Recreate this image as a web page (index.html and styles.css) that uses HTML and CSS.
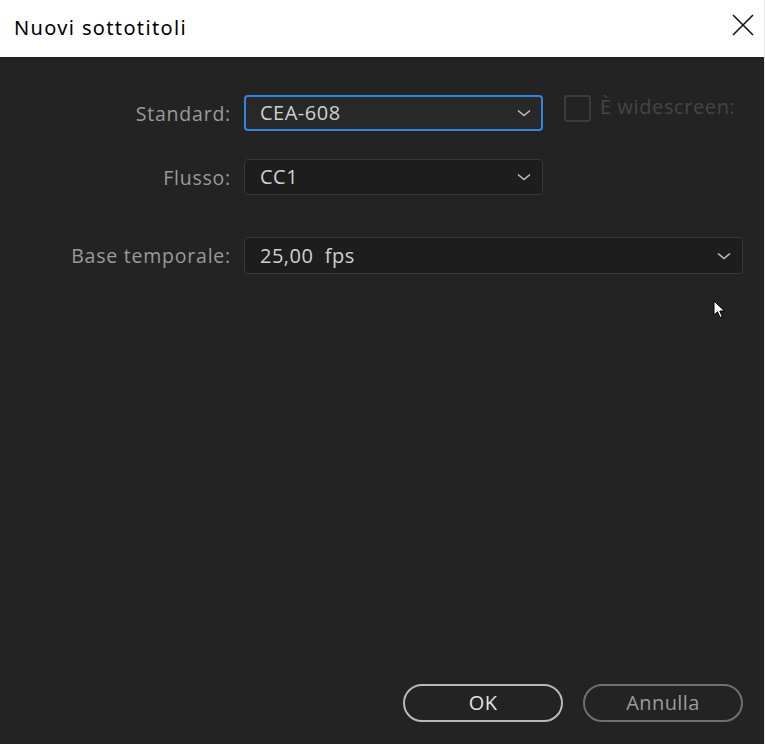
FILE: index.html
```html
<!DOCTYPE html>
<html lang="it">
<head>
<meta charset="utf-8">
<title>Nuovi sottotitoli</title>
<link rel="stylesheet" href="styles.css">
</head>
<body>
<div class="window">
  <header class="titlebar">
    <span class="title">Nuovi sottotitoli</span>
    <svg class="close" width="22" height="22" viewBox="0 0 22 22"><path d="M1 1L21 21M21 1L1 21" stroke="#111" stroke-width="1.6" fill="none"/></svg>
  </header>
  <main class="content">
    <div class="form">
      <div class="row row-standard">
        <label class="label">Standard:</label>
        <div class="select select-focus select-narrow">
          <span class="value">CEA-608</span>
          <svg class="chev" width="14" height="8" viewBox="0 0 14 8"><path d="M1 1.5L7 6.5L13 1.5" stroke="#bdbdbd" stroke-width="1.6" fill="none"/></svg>
        </div>
        <div class="check">
          <span class="box"></span>
          <span class="check-label">È widescreen:</span>
        </div>
      </div>
      <div class="row row-flusso">
        <label class="label">Flusso:</label>
        <div class="select select-narrow">
          <span class="value">CC1</span>
          <svg class="chev" width="14" height="8" viewBox="0 0 14 8"><path d="M1 1.5L7 6.5L13 1.5" stroke="#bdbdbd" stroke-width="1.6" fill="none"/></svg>
        </div>
      </div>
      <div class="row row-base">
        <label class="label">Base temporale:</label>
        <div class="select select-wide">
          <span class="value">25,00&nbsp; fps</span>
          <svg class="chev" width="14" height="8" viewBox="0 0 14 8"><path d="M1 1.5L7 6.5L13 1.5" stroke="#bdbdbd" stroke-width="1.6" fill="none"/></svg>
        </div>
      </div>
    </div>
    <div class="buttons">
      <button class="btn btn-ok">OK</button>
      <button class="btn btn-cancel">Annulla</button>
    </div>
    <svg class="cursor" width="14" height="20" viewBox="0 0 14 20"><path d="M1 1L1 15L4.5 11.8L7 17.5L9.2 16.6L6.8 11L11.5 11Z" fill="#fff" stroke="#000" stroke-width="1"/></svg>
  </main>
</div>
</body>
</html>
```
FILE: styles.css
```css
html, body {
  margin: 0;
  padding: 0;
  width: 765px;
  height: 744px;
  overflow: hidden;
  background: #232323;
}
.window {
  width: 765px;
  height: 744px;
  display: flex;
  flex-direction: column;
  box-sizing: border-box;
  border-right: 1px solid #e9e9e9;
}
.titlebar {
  height: 57px;
  flex: none;
  background: #ffffff;
  display: flex;
  align-items: center;
  justify-content: space-between;
  padding: 0 10px 0 14px;
}
.title {
  font-family: "Noto Sans", "Open Sans", sans-serif;
  font-size: 20px;
  letter-spacing: 1.35px;
  color: #000;
  margin-top: -3px;
}
.close {
  margin-top: -7px;
}
.content {
  flex: 1;
  position: relative;
  display: flex;
  flex-direction: column;
  padding: 38px 0 22px 0;
  font-family: "Open Sans", "Noto Sans", sans-serif;
}
.form {
  display: flex;
  flex-direction: column;
}
.row {
  display: flex;
  align-items: flex-start;
}
.row-flusso { margin-top: 28px; }
.row-base { margin-top: 42px; }
.label {
  width: 231px;
  flex: none;
  text-align: right;
  font-size: 19.5px;
  color: #9a9a9a;
  line-height: 36px;
  height: 36px;
  padding-top: 1px;
  box-sizing: border-box;
  margin-right: 13px;
  letter-spacing: 0.78px;
}
.select {
  height: 36px;
  box-sizing: border-box;
  border: 1px solid #383838;
  border-radius: 4px;
  background: #1d1d1d;
  display: flex;
  align-items: center;
  justify-content: space-between;
  padding: 0 11px 0 15px;
}
.select-narrow { width: 299px; }
.select-wide { width: 499px; height: 37px; }
.select-focus {
  border: 2px solid #2f86de;
  background: #282828;
  padding-left: 14px;
  padding-right: 10px;
}
.value {
  font-size: 20px;
  letter-spacing: 0.5px;
  color: #d0d0d0;
  line-height: 1;
  margin-top: 0;
}
.chev { flex: none; }
.check {
  display: flex;
  align-items: center;
  margin-left: 21px;
  height: 27px;
}
.box {
  width: 27px;
  height: 27px;
  box-sizing: border-box;
  border: 2px solid #3b3b3b;
  border-radius: 3px;
}
.check-label {
  margin-left: 9px;
  font-size: 20px;
  letter-spacing: 0.6px;
  color: #454545;
  line-height: 26px;
  margin-top: -3px;
}
.buttons {
  margin-top: auto;
  display: flex;
  justify-content: flex-end;
  gap: 20px;
  padding-right: 21px;
}
.btn {
  width: 160px;
  height: 38px;
  box-sizing: border-box;
  border-radius: 19px;
  background: transparent;
  font-family: "Open Sans", "Noto Sans", sans-serif;
  font-size: 20px;
  letter-spacing: 0.4px;
  padding: 0 0 2px 0;
}
.btn-ok {
  border: 2px solid #b9b9b9;
  color: #e2e2e2;
}
.btn-cancel {
  border: 2px solid #6f6f6f;
  color: #9c9c9c;
}
.cursor {
  position: absolute;
  left: 713px;
  top: 243px;
}
```
